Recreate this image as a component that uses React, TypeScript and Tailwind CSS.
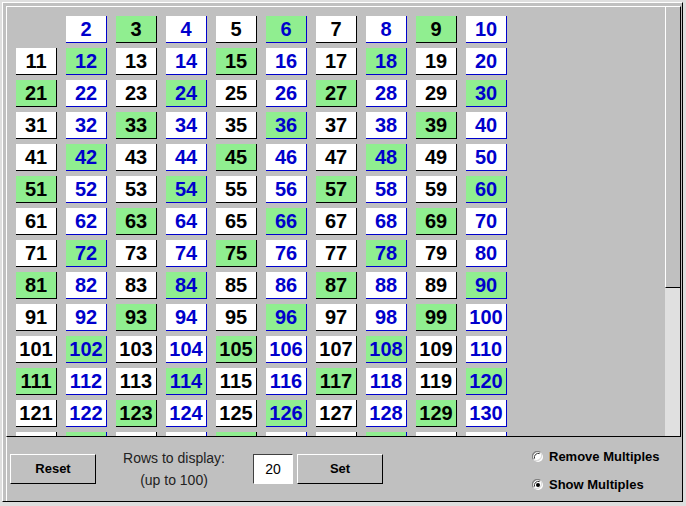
import clsx from "clsx";

// only the rows that fit in the pane are drawn; the rest would be clipped anyway
const ROWS = 14;

function Cell({ n }: { n: number }) {
  if (n === 1) return <div />;
  const even = n % 2 === 0;
  const multiple = n % 3 === 0;
  return (
    <div
      className={clsx(
        "flex items-center justify-center border-r border-b text-[20px] font-bold leading-none",
        even ? "border-[#0000cc] text-[#0000cc]" : "border-black text-black",
        multiple ? "bg-[#90ee90]" : "bg-white"
      )}
    >
      {n}
    </div>
  );
}

function Radio({ checked, label }: { checked: boolean; label: string }) {
  return (
    <div className="flex h-[18px] items-center gap-[5px]">
      <svg width="12" height="12" viewBox="0 0 12 12">
        <circle cx="6" cy="6" r="5" fill="#fff" />
        <path d="M1.5 8.5 A5 5 0 0 1 8.5 1.5" fill="none" stroke="#808080" strokeWidth="1.2" />
        <path d="M2.6 7.6 A3.9 3.9 0 0 1 7.6 2.6" fill="none" stroke="#303030" strokeWidth="1" />
        <path d="M8.5 1.5 A5 5 0 0 1 1.5 8.5" fill="none" stroke="#dcdcdc" strokeWidth="1.2" />
        {checked && <circle cx="6" cy="6" r="2" fill="#000" />}
      </svg>
      <span className="text-[13px] font-bold text-black">{label}</span>
    </div>
  );
}

export default function App() {
  const numbers = Array.from({ length: ROWS * 10 }, (_, i) => i + 1);

  return (
    <div className="h-[506px] w-[686px] bg-[#dedede] pt-[2px] pr-[3px] pb-[4px] pl-[2px] font-['Liberation_Sans',Arial,sans-serif]">
      <div className="flex h-full flex-col border-t border-l border-white border-r border-b border-r-black border-b-black bg-[#c0c0c0] pt-[3px] pl-[3px]">
        {/* number grid with scrollbar */}
        <div className="mr-[1px] flex h-[431px] border-t border-l border-white border-r border-b border-r-black border-b-black">
          <div className="flex-1 overflow-hidden pt-[9px] pl-[9px]">
            <div className="grid grid-cols-[repeat(10,41px)] auto-rows-[27px] gap-x-[9px] gap-y-[5px]">
              {numbers.map((n) => (
                <Cell key={n} n={n} />
              ))}
            </div>
          </div>
          <div className="flex w-[15px] flex-col bg-[#e0e0e0]">
            <div className="h-[281px] border-l border-white border-b border-b-black bg-[#c0c0c0]" />
          </div>
        </div>

        {/* controls */}
        <div className="flex h-[64px] items-center border-l border-white text-black">
          <button className="ml-[3px] h-[30px] w-[86px] border-t border-l border-white border-r border-b border-r-black border-b-black bg-[#c0c0c0] text-[13px] font-bold">
            Reset
          </button>
          <div className="ml-[18px] flex w-[120px] flex-col items-center gap-[6px] text-[14px] leading-[16px] text-[#222]">
            <span>Rows to display:</span>
            <span>(up to 100)</span>
          </div>
          <div className="ml-[19px] flex h-[30px] w-[40px] items-center justify-center border-t border-l border-[#404040] border-r border-b border-r-white border-b-white bg-white text-[14px]">
            20
          </div>
          <button className="ml-[4px] h-[30px] w-[86px] border-t border-l border-white border-r border-b border-r-black border-b-black bg-[#c0c0c0] text-[13px] font-bold">
            Set
          </button>
          <div className="ml-[149px] flex flex-col gap-[10px] pt-[3px]">
            <Radio checked={false} label="Remove Multiples" />
            <Radio checked={true} label="Show Multiples" />
          </div>
        </div>
      </div>
    </div>
  );
}
